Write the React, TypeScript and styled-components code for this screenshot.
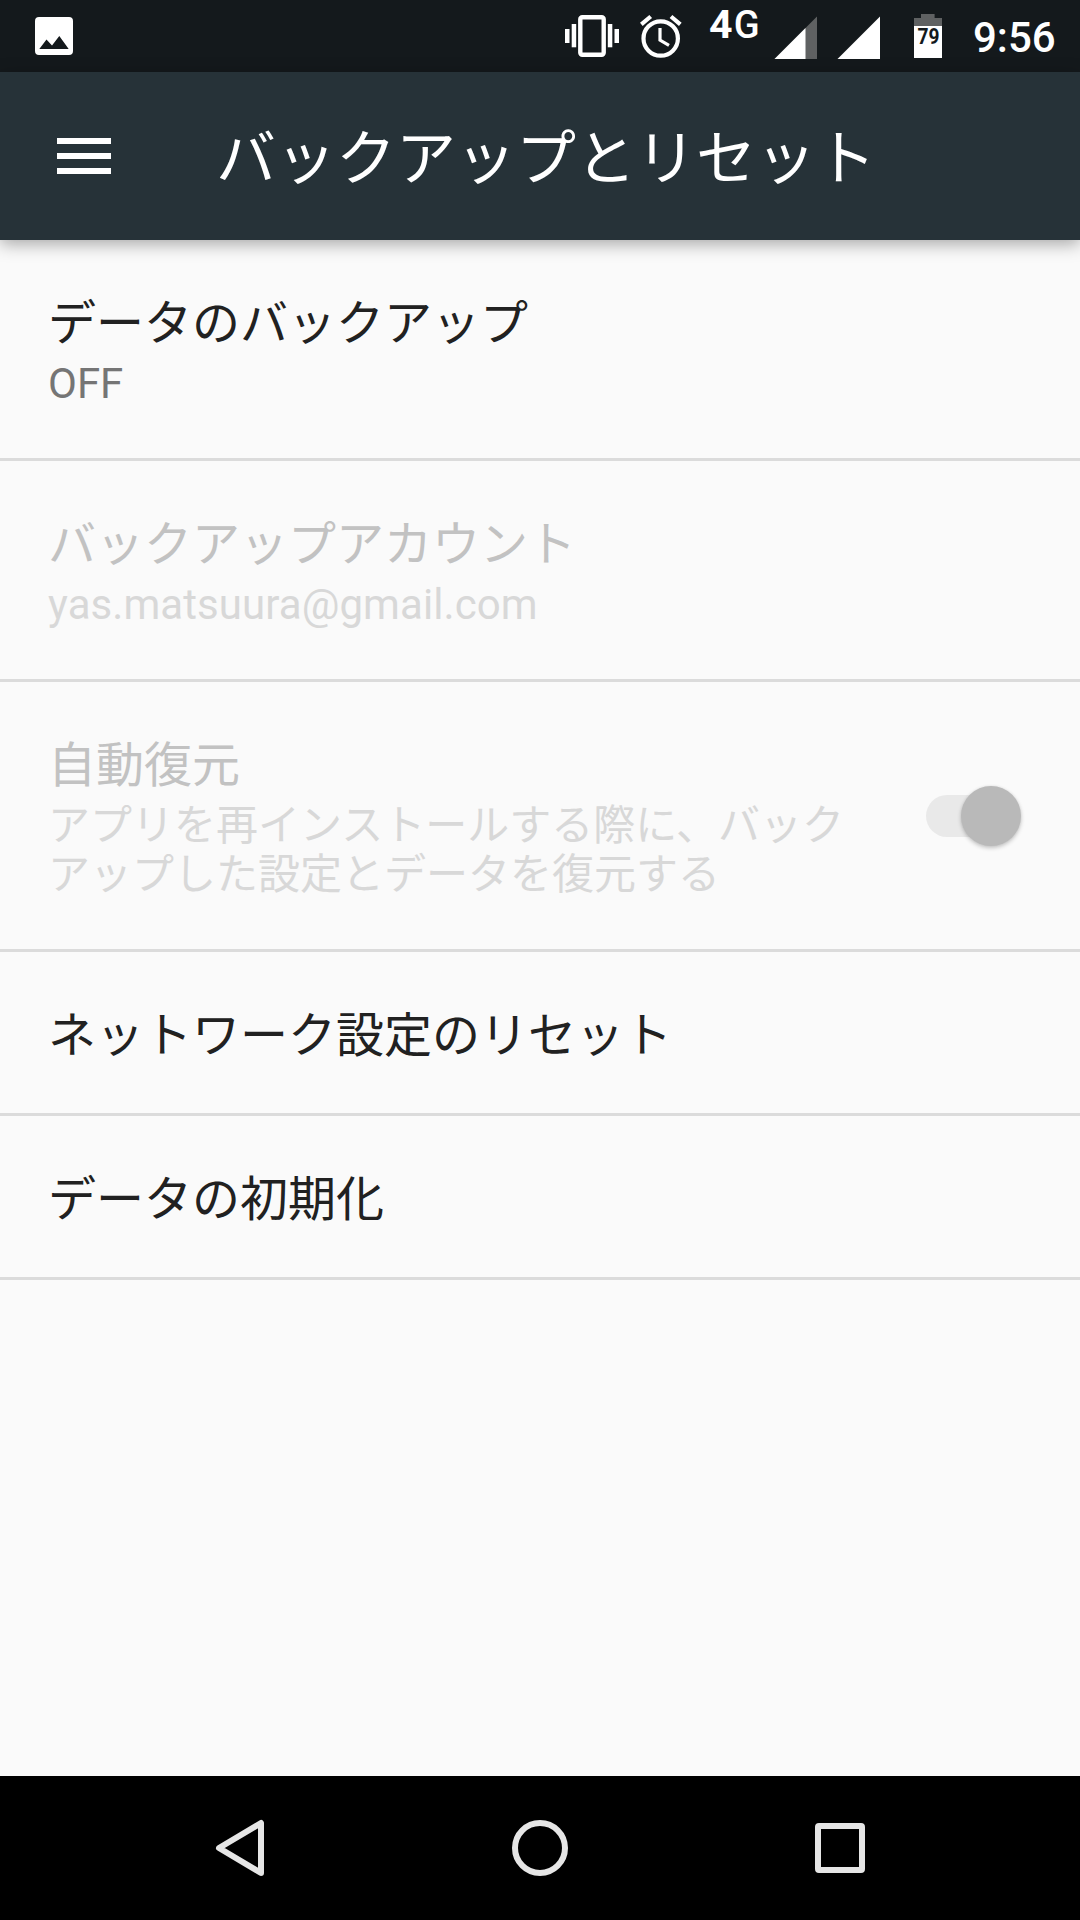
import React from "react";
import styled, { createGlobalStyle } from "styled-components";

const fontStack = `Roboto, "Noto Sans CJK JP", sans-serif`;

const GlobalStyle = createGlobalStyle`
  *, *::before, *::after { box-sizing: border-box; }
  html, body { margin: 0; padding: 0; background: #fafafa; }
  body { font-family: ${fontStack}; overflow: hidden; }
`;

const Screen = styled.div`
  display: flex;
  flex-direction: column;
  width: 1080px;
  height: 1920px;
  overflow: hidden;
  background: #fafafa;
`;

const StatusBar = styled.div`
  display: flex;
  flex: none;
  height: 72px;
  padding: 0 24px 0 35px;
  background: #14191c;
  color: #fff;
`;

const StatusIcons = styled.div`
  display: flex;
  margin-left: auto;
`;

const StatusIcon = styled.svg<{ $gap?: number }>`
  display: block;
  flex: none;
  height: 72px;
  margin-left: ${(p) => p.$gap ?? 0}px;
`;

const NetworkType = styled.span`
  display: block;
  width: 65px;
  margin-left: 27px;
  padding-top: 3px;
  font-size: 38px;
  line-height: 45px;
  font-weight: 500;
`;

const Heavy = styled.span`
  display: inline-block;
  margin-right: 3px;
  font-weight: 700;
  transform: scaleX(1.08);
  transform-origin: left;
`;

const Clock = styled.span`
  width: 83px;
  margin-left: 31px;
  font-size: 42px;
  line-height: 49px;
  padding-top: 13px;
  font-weight: 500;
  white-space: nowrap;
`;

const AppBar = styled.header`
  display: flex;
  flex: none;
  align-items: center;
  height: 168px;
  padding-left: 57px;
  background: #263238;
  color: #fff;
  box-shadow: 0 4px 16px rgba(0, 0, 0, 0.34);
  z-index: 1;
`;

const MenuButton = styled.button`
  display: flex;
  flex-direction: column;
  gap: 9px;
  width: 54px;
  margin-right: 105px;
  padding: 0;
  border: 0;
  background: none;
`;

const MenuBar = styled.span`
  height: 6px;
  background: #fff;
`;

const AppTitle = styled.h1`
  margin: 0;
  padding-top: 8px;
  font-size: 60px;
  line-height: 70px;
  font-weight: 400;
  white-space: nowrap;
`;

const List = styled.main`
  display: flex;
  flex: 1;
  flex-direction: column;
`;

const Row = styled.div`
  display: flex;
  align-items: center;
  justify-content: space-between;
  padding: 0 48px;
  border-bottom: 3px solid #dbdbdb;
`;

const RowText = styled.div`
  display: flex;
  flex-direction: column;
  gap: 7px;
  padding: 56px 0 50px;

  &:has(> :only-child) {
    padding-bottom: 49px;
  }
`;

const Title = styled.div<{ $disabled?: boolean }>`
  font-size: 48px;
  line-height: 56px;
  color: ${(p) => (p.$disabled ? "#c2c2c2" : "#212121")};
  white-space: nowrap;
`;

const Summary = styled.div<{ $disabled?: boolean }>`
  font-size: 42px;
  line-height: 49px;
  color: ${(p) => (p.$disabled ? "#d8d8d8" : "#757575")};
  white-space: pre-line;
`;

const Latin = styled.span`
  letter-spacing: 0.07px;
`;

const SwitchTrack = styled.div`
  display: flex;
  align-items: center;
  justify-content: flex-end;
  flex: none;
  width: 87px;
  height: 42px;
  margin-right: 19px;
  border-radius: 21px;
  background: #e9e9e9;
`;

const SwitchThumb = styled.div`
  flex: none;
  width: 60px;
  height: 60px;
  margin-right: -8px;
  border-radius: 50%;
  background: #b9b9b9;
  box-shadow: 0 2px 4px rgba(0, 0, 0, 0.22), 0 0 3px rgba(0, 0, 0, 0.06);
`;

const NavBar = styled.nav`
  display: flex;
  flex: none;
  align-items: center;
  justify-content: center;
  gap: 240px;
  height: 144px;
  background: #000;
`;

const NavIcon = styled.svg`
  display: block;
  width: 60px;
  height: 60px;
  fill: none;
  stroke: #e6e6e6;
  stroke-width: 6;
  stroke-linejoin: round;
`;

interface Preference {
  title: string;
  summary?: React.ReactNode;
  disabled?: boolean;
  toggle?: boolean;
}

const preferences: Preference[] = [
  { title: "データのバックアップ", summary: "OFF" },
  {
    title: "バックアップアカウント",
    summary: <Latin>yas.matsuura@gmail.com</Latin>,
    disabled: true,
  },
  {
    title: "自動復元",
    summary:
      "アプリを再インストールする際に、バック\nアップした設定とデータを復元する",
    disabled: true,
    toggle: true,
  },
  { title: "ネットワーク設定のリセット" },
  { title: "データの初期化" },
];

function Status() {
  return (
    <StatusBar>
      <StatusIcon width="38" viewBox="0 0 38 72">
        <path
          fill="#fff"
          fillRule="evenodd"
          d="M4 17H34A4 4 0 0 1 38 21V51A4 4 0 0 1 34 55H4A4 4 0 0 1 0 51V21A4 4 0 0 1 4 17ZM4.300 49H33.700L24.300 36L17 45.500L11.500 39.500Z"
        />
      </StatusIcon>
      <StatusIcons>
        <StatusIcon width="54" viewBox="565 0 54 72" fill="#fff">
          <rect x="580.300" y="17.300" width="23.400" height="37.400" rx="2" fill="none" stroke="#fff" strokeWidth="4.400" />
          <rect x="565" y="29" width="4.500" height="14" />
          <rect x="571.700" y="24" width="4.500" height="23.300" />
          <rect x="607.800" y="24" width="4.500" height="23.300" />
          <rect x="614.500" y="29" width="4.500" height="14" />
        </StatusIcon>
        <StatusIcon $gap={21} width="42" viewBox="640 0 42 72" fill="none" stroke="#fff" strokeWidth="4.200">
          <circle cx="660.700" cy="38.500" r="17.200" />
          <path d="M641.300 24.300L650.700 16.500M671 16.500L680.300 24.300" />
          <path strokeWidth="3.200" d="M660 28V40.200L669 45.400" />
        </StatusIcon>
        <NetworkType>
          <Heavy>4</Heavy>G
        </NetworkType>
        <StatusIcon width="43" viewBox="774 0 43 72">
          <path fill="#5f6162" d="M774.500 59H817V16.500Z" />
          <path fill="#fff" d="M774.500 59H805.500V28Z" />
        </StatusIcon>
        <StatusIcon $gap={20} width="43" viewBox="837 0 43 72">
          <path fill="#fff" d="M837.500 59H880V16.500Z" />
        </StatusIcon>
        <StatusIcon $gap={34} width="28" viewBox="914 0 28 72">
          <path fill="#5f6162" d="M914 18H921V14H934.600V18H942V26H914Z" />
          <path fill="#fff" d="M914 26H942V58H914Z" />
          <text
            x="917.500"
            y="44"
            fill="#14191c"
            fontSize="21.500"
            fontWeight="700"
            textLength="22"
            lengthAdjust="spacingAndGlyphs"
          >
            79
          </text>
        </StatusIcon>
        <Clock>9:56</Clock>
      </StatusIcons>
    </StatusBar>
  );
}

export default function App() {
  return (
    <Screen lang="ja">
      <GlobalStyle />
      <Status />
      <AppBar>
        <MenuButton aria-label="メニュー">
          <MenuBar />
          <MenuBar />
          <MenuBar />
        </MenuButton>
        <AppTitle>バックアップとリセット</AppTitle>
      </AppBar>
      <List>
        {preferences.map((p) => (
          <Row key={p.title}>
            <RowText>
              <Title $disabled={p.disabled}>{p.title}</Title>
              {p.summary && <Summary $disabled={p.disabled}>{p.summary}</Summary>}
            </RowText>
            {p.toggle && (
              <SwitchTrack>
                <SwitchThumb />
              </SwitchTrack>
            )}
          </Row>
        ))}
      </List>
      <NavBar>
        <NavIcon viewBox="210 1818 60 60">
          <path d="M219 1848L261 1823V1873Z" />
        </NavIcon>
        <NavIcon viewBox="510 1818 60 60">
          <circle cx="540" cy="1848" r="25" />
        </NavIcon>
        <NavIcon viewBox="810 1818 60 60">
          <rect x="818" y="1826" width="44" height="44" rx="1" />
        </NavIcon>
      </NavBar>
    </Screen>
  );
}
